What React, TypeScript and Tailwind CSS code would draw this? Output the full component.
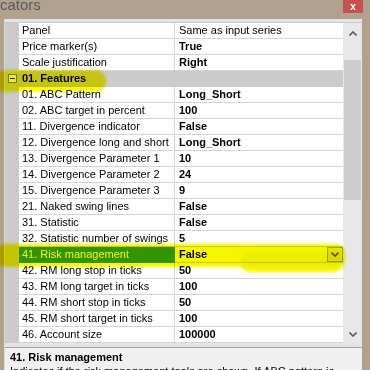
import React from "react";

type Row = { n: string; v?: string; bold?: boolean; cat?: boolean; sel?: boolean };

const rows: Row[] = [
  { n: "Panel", v: "Same as input series", bold: false },
  { n: "Price marker(s)", v: "True", bold: true },
  { n: "Scale justification", v: "Right", bold: true },
  { n: "01. Features", cat: true },
  { n: "01. ABC Pattern", v: "Long_Short", bold: true },
  { n: "02. ABC target in percent", v: "100", bold: true },
  { n: "11. Divergence indicator", v: "False", bold: true },
  { n: "12. Divergence long and short", v: "Long_Short", bold: true },
  { n: "13. Divergence Parameter 1", v: "10", bold: true },
  { n: "14. Divergence Parameter 2", v: "24", bold: true },
  { n: "15. Divergence Parameter 3", v: "9", bold: true },
  { n: "21. Naked swing lines", v: "False", bold: true },
  { n: "31. Statistic", v: "False", bold: true },
  { n: "32. Statistic number of swings", v: "5", bold: true },
  { n: "41. Risk management", v: "False", bold: true, sel: true },
  { n: "42. RM long stop in ticks", v: "50", bold: true },
  { n: "43. RM long target in ticks", v: "100", bold: true },
  { n: "44. RM short stop in ticks", v: "50", bold: true },
  { n: "45. RM short target in ticks", v: "100", bold: true },
  { n: "46. Account size", v: "100000", bold: true },
];

function Chevron({ up }: { up?: boolean }) {
  return (
    <svg width="8" height="5" viewBox="0 0 8 5">
      <polyline
        points={up ? "0.5,4.5 4,1 7.5,4.5" : "0.5,0.5 4,4 7.5,0.5"}
        fill="none"
        stroke="#5a5a5a"
        strokeWidth="1.6"
      />
    </svg>
  );
}

function GridRow({ r }: { r: Row }) {
  if (r.cat) {
    return (
      <div className="flex shrink-0 h-[16px] bg-[#cbcbcb] border-b border-[#cbcbcb]">
        <div className="w-[14px] flex items-center justify-center">
          <div className="w-[9px] h-[9px] border border-[#7a7a7a] bg-[#f4f4f4] flex items-center justify-center">
            <div className="w-[5px] h-[1px] bg-[#222]" />
          </div>
        </div>
        <div className="flex items-center pl-[3px] font-bold text-black">{r.n}</div>
      </div>
    );
  }
  return (
    <div className="flex shrink-0 h-[16px]">
      <div className="w-[14px] bg-[#cbcbcb]" />
      <div
        className={
          r.sel
            ? "w-[156px] flex items-center pl-[3px] bg-[#3399ff] text-white border-b border-r border-[#3399ff] whitespace-nowrap overflow-hidden"
            : "w-[156px] flex items-center pl-[3px] bg-white text-black border-b border-r border-[#d4d4d4] whitespace-nowrap overflow-hidden"
        }
      >
        {r.n}
      </div>
      <div className="flex-1 flex items-center justify-between bg-white border-b border-[#d4d4d4]">
        <span className={r.bold ? "pl-[4px] font-bold text-black" : "pl-[4px] text-black"}>{r.v}</span>
        {r.sel && (
          <div className="w-[16px] h-[15px] border border-[#a6a6a6] bg-[#ececec] flex items-center justify-center">
            <Chevron />
          </div>
        )}
      </div>
    </div>
  );
}

export default function App() {
  return (
    <div className="relative w-[370px] h-[370px] overflow-hidden bg-[#b1a18f] font-['Liberation_Sans',Arial,sans-serif] text-[11px] leading-none">
      <div className="h-[19px] shrink-0 flex items-start justify-between">
        <span className="text-[15px] leading-[15px] -mt-[3px] text-[#5a5a5a]">cators</span>
        <div className="w-[20px] h-[13px] mr-[7px] bg-[#c75050] flex items-center justify-center text-white text-[10px] font-bold">
          x
        </div>
      </div>
      <div className="ml-[4px] w-[358px] bg-[#e4e4e4] border-l border-[#d9d9d9] h-[351px] flex flex-col overflow-hidden">
        <div className="h-[4px] shrink-0 border-b border-[#c9c9c9]" />
        <div className="flex shrink-0">
          <div className="w-[338px] flex flex-col">
            {rows.map((r, i) => (
              <GridRow key={i} r={r} />
            ))}
          </div>
          <div className="w-[19px] bg-[#e8e8e8] flex flex-col">
            <div className="h-[20px] shrink-0 flex items-center justify-center">
              <Chevron up />
            </div>
            <div className="h-[17px] shrink-0" />
            <div className="mx-[1px] h-[140px] shrink-0 bg-[#cdcdcd]" />
            <div className="flex-1" />
            <div className="h-[18px] shrink-0 flex items-center justify-center">
              <Chevron />
            </div>
          </div>
        </div>
        <div className="h-[4px] shrink-0" />
        <div className="flex-1 min-h-0 overflow-hidden bg-[#f0f0f0] border-t border-[#a0a0a0] pl-[5px] pt-[2px] text-black">
          <div className="font-bold text-[11px] leading-[14px] whitespace-nowrap">41. Risk management</div>
          <div className="leading-[14px] whitespace-nowrap">Indicates if the risk management tools are shown. If ABC pattern is</div>
        </div>
      </div>

      {/* highlighter strokes */}
      <div className="absolute left-[-6px] top-[70px] w-[112px] h-[22px] rounded-[10px] bg-[#f6f600] mix-blend-multiply blur-[1.5px] opacity-90" />
      <div className="absolute left-[-4px] top-[244px] w-[349px] h-[23px] rounded-[9px] bg-[#f6f600] mix-blend-multiply blur-[1.5px]" />
      <div className="absolute left-[240px] top-[252px] w-[104px] h-[20px] rounded-[10px] bg-[#f6f600] mix-blend-multiply blur-[1.5px]" />
    </div>
  );
}
